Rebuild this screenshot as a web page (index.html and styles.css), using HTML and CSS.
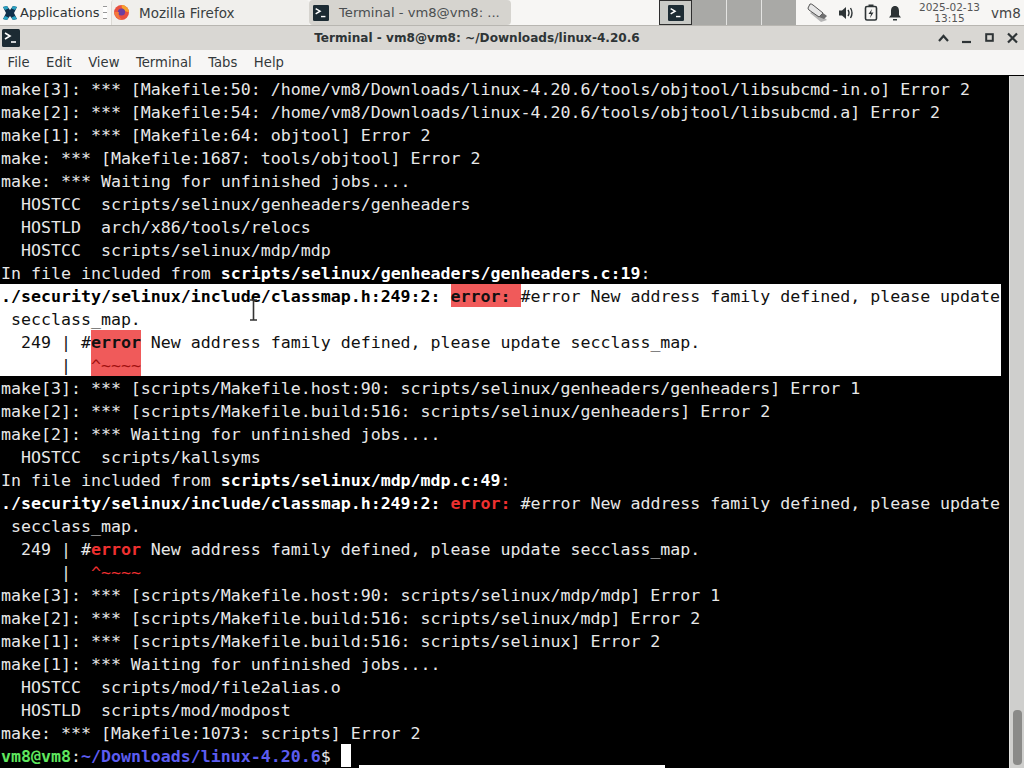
FILE: index.html
```html
<!DOCTYPE html>
<html lang="en">
<head>
<meta charset="utf-8">
<title>Terminal - vm8@vm8</title>
<link rel="stylesheet" href="styles.css">
</head>
<body>
<div class="screen">
  <header class="panel">
    <div class="apps">
      <svg class="apps-icon" width="16" height="16" viewBox="0 0 16 16"><path d="M1 2 L5 1 L8 5 L11 1 L15 2 L12 8 L15 14 L11 15 L8 11 L5 15 L1 14 L4 8 Z" fill="#0f2f4a"/><path d="M1 2 L5 1 L6.5 3.5 L3 5 Z M15 2 L11 1 L9.5 3.5 L13 5 Z M1 14 L5 15 L6.5 12.5 L3 11 Z M15 14 L11 15 L9.5 12.5 L13 11 Z" fill="#2aa3c4"/></svg>
      <span>Applications</span>
      <span class="handle"></span>
    </div>
    <div class="task task-ff">
      <svg width="17" height="17" viewBox="0 0 17 17"><circle cx="8.5" cy="8.5" r="7.5" fill="#e8503f"/><path d="M8.5 1 A7.5 7.5 0 0 1 16 8.5 L12 7 L9 4 Z" fill="#f7a02c"/><circle cx="8.5" cy="8" r="3.6" fill="#6b3fa0"/><path d="M1 8 C2 13 6 16 10 15.6 C6 14 5 11 6 8 Z" fill="#f4793b"/></svg>
      <span>Mozilla Firefox</span>
    </div>
    <div class="task task-term">
      <svg class="term-icon" width="16" height="16" viewBox="0 0 18 18"><rect width="18" height="18" rx="1.5" fill="#1c2b33"/><path d="M3 4 L8 7 L3 10" fill="none" stroke="#fff" stroke-width="1.6"/><path d="M9 13 H14" stroke="#fff" stroke-width="1.6"/></svg>
      <span>Terminal - vm8@vm8: ...</span>
    </div>
    <div class="spacer"></div>
    <div class="pager">
      <div class="ws ws-active"><svg width="16" height="16" viewBox="0 0 18 18"><rect width="18" height="18" rx="1.5" fill="#1c2b33"/><path d="M3 4 L8 7 L3 10" fill="none" stroke="#fff" stroke-width="1.6"/><path d="M9 13 H14" stroke="#fff" stroke-width="1.6"/></svg></div>
      <div class="ws"></div>
      <div class="ws"></div>
      <div class="ws"></div>
    </div>
    <div class="tray">
      <svg width="21" height="20" viewBox="0 0 21 20"><path d="M3 10 L14 19 L20 17 L8 7 Z" fill="#b5b5b5"/><path d="M3 1 L1 5 Q1 6 2 7 L12 14 L16 10 L6 2 Q4 0.5 3 1 Z" fill="#e6e6e6" stroke="#555" stroke-width="1"/><path d="M12 14 L16 10 L20 13 L17 16 Z" fill="#6f6f6f"/></svg>
      <svg width="16" height="16" viewBox="0 0 16 16"><path d="M1 5.5 H4 L8 2 V14 L4 10.5 H1 Z" fill="#2e3436"/><path d="M10 5 Q12 8 10 11 M12.5 3 Q15.5 8 12.5 13" fill="none" stroke="#2e3436" stroke-width="1.4"/></svg>
      <svg width="14" height="17" viewBox="0 0 14 17"><rect x="4.5" y="0.5" width="5" height="2" fill="#2e3436"/><rect x="1.5" y="2.5" width="11" height="13.5" rx="1.5" fill="none" stroke="#2e3436" stroke-width="1.6"/><path d="M8 5 L4.5 10 H7 L6 14 L9.5 8.5 H7 Z" fill="#2e3436"/></svg>
      <svg width="14" height="16" viewBox="0 0 14 16"><path d="M7 1 C10 1 11 3.5 11 6 V10 L13 12.5 H1 L3 10 V6 C3 3.5 4 1 7 1 Z" fill="#2e3436"/><rect x="5" y="14" width="4" height="1.5" fill="#2e3436"/></svg>
    </div>
    <div class="clock"><span>2025-02-13</span><span>13:15</span></div>
    <div class="user">vm8</div>
  </header>

  <div class="titlebar">
    <svg class="title-icon" width="18" height="18" viewBox="0 0 18 18"><rect width="18" height="18" rx="1.5" fill="#1c2b33"/><path d="M3 4 L8 7 L3 10" fill="none" stroke="#fff" stroke-width="1.6"/><path d="M9 13 H14" stroke="#fff" stroke-width="1.6"/></svg>
    <div class="title">Terminal - vm8@vm8: ~/Downloads/linux-4.20.6</div>
    <div class="wm">
      <svg width="23" height="14" viewBox="0 0 23 14"><path d="M7 10 L11.5 5 L16 10" fill="none" stroke="#2e3436" stroke-width="2.2"/></svg>
      <svg width="23" height="14" viewBox="0 0 23 14"><path d="M7 11 H16" stroke="#2e3436" stroke-width="2.2"/></svg>
      <svg width="23" height="14" viewBox="0 0 23 14"><rect x="8.2" y="3.2" width="6.6" height="6.6" fill="none" stroke="#2e3436" stroke-width="2"/></svg>
      <svg width="23" height="14" viewBox="0 0 23 14"><path d="M7 2.5 L16 11.5 M16 2.5 L7 11.5" stroke="#2e3436" stroke-width="2.2"/></svg>
    </div>
  </div>

  <nav class="menubar">
    <span>File</span><span>Edit</span><span>View</span><span>Terminal</span><span>Tabs</span><span>Help</span>
  </nav>

  <main class="term">
    <div class="output">
<div class="row">make[3]: *** [Makefile:50: /home/vm8/Downloads/linux-4.20.6/tools/objtool/libsubcmd-in.o] Error 2</div>
<div class="row">make[2]: *** [Makefile:54: /home/vm8/Downloads/linux-4.20.6/tools/objtool/libsubcmd.a] Error 2</div>
<div class="row">make[1]: *** [Makefile:64: objtool] Error 2</div>
<div class="row">make: *** [Makefile:1687: tools/objtool] Error 2</div>
<div class="row">make: *** Waiting for unfinished jobs....</div>
<div class="row">  HOSTCC  scripts/selinux/genheaders/genheaders</div>
<div class="row">  HOSTLD  arch/x86/tools/relocs</div>
<div class="row">  HOSTCC  scripts/selinux/mdp/mdp</div>
<div class="row">In file included from <b>scripts/selinux/genheaders/genheaders.c:19</b>:</div>
<div class="row sel"><b>./security/selinux/include/classmap.h:249:2: </b><b class="hit">error: </b>#error New address family defined, please update</div>
<div class="row sel"> secclass_map.</div>
<div class="row sel">  249 | #<b class="hit">error</b> New address family defined, please update secclass_map.</div>
<div class="row sel">      |  <span class="hit caret">^~~~~</span></div>
<div class="row">make[3]: *** [scripts/Makefile.host:90: scripts/selinux/genheaders/genheaders] Error 1</div>
<div class="row">make[2]: *** [scripts/Makefile.build:516: scripts/selinux/genheaders] Error 2</div>
<div class="row">make[2]: *** Waiting for unfinished jobs....</div>
<div class="row">  HOSTCC  scripts/kallsyms</div>
<div class="row">In file included from <b>scripts/selinux/mdp/mdp.c:49</b>:</div>
<div class="row"><b>./security/selinux/include/classmap.h:249:2: </b><b class="red">error: </b>#error New address family defined, please update</div>
<div class="row"> secclass_map.</div>
<div class="row">  249 | #<b class="red">error</b> New address family defined, please update secclass_map.</div>
<div class="row">      |  <span class="red">^~~~~</span></div>
<div class="row">make[3]: *** [scripts/Makefile.host:90: scripts/selinux/mdp/mdp] Error 1</div>
<div class="row">make[2]: *** [scripts/Makefile.build:516: scripts/selinux/mdp] Error 2</div>
<div class="row">make[1]: *** [scripts/Makefile.build:516: scripts/selinux] Error 2</div>
<div class="row">make[1]: *** Waiting for unfinished jobs....</div>
<div class="row">  HOSTCC  scripts/mod/file2alias.o</div>
<div class="row">  HOSTLD  scripts/mod/modpost</div>
<div class="row">make: *** [Makefile:1073: scripts] Error 2</div>
<div class="row"><b class="green">vm8@vm8</b>:<b class="blue">~/Downloads/linux-4.20.6</b>$ <span class="cursor"> </span></div>
    </div>
    <div class="scrollbar"><div class="thumb"></div></div>
  </main>

  <svg class="ibeam" width="9" height="22" viewBox="0 0 9 22"><path d="M1 1 H8 M4.5 1 V21 M1 21 H8" fill="none" stroke="#333" stroke-width="1.6"/></svg>
  <div class="stray"></div>
</div>
</body>
</html>
```

FILE: styles.css
```css
* { box-sizing: border-box; }
html, body { margin: 0; padding: 0; }
body { background: #000; font-family: "DejaVu Sans", sans-serif; }
.screen { position: relative; width: 1024px; height: 768px; overflow: hidden; display: flex; flex-direction: column; }

.panel { flex: 0 0 26px; display: flex; align-items: stretch; background: #f7f6f4; border-bottom: 1px solid #b8b6b1; color: #2e3436; font-size: 13px; }
.apps { flex: 0 0 111px; display: flex; align-items: center; padding-left: 2px; gap: 2px; }
.handle { width: 4px; height: 13px; margin-left: 2px; border-top: 1px solid #999; border-bottom: 1px solid #999; background: linear-gradient(#fff 45%, #999 45%, #999 55%, #fff 55%); }
.task { display: flex; align-items: center; border-radius: 3px 3px 0 0; }
.task-ff { flex: 0 0 198px; padding-left: 1px; gap: 9px; background: #f0efec; border-left: 1px solid #dcdad5; color: #3a3f41; font-size: 13.5px; }
.task-term { flex: 0 0 202px; padding-left: 4px; gap: 10px; background: #d6d4cf; color: #4a4e50; border-radius: 4px; font-size: 13.15px; }
.spacer { flex: 0 0 148px; }
.pager { flex: 0 0 137px; display: flex; }
.ws { flex: 1; background: #a9a9a6; border-right: 1px solid #e4e4e2; }
.ws:last-child { border-right: 0; }
.ws-active { display: flex; align-items: center; justify-content: center; background: #c9cac6; border: 1px solid #2e2e2e; flex: 0 0 33px; }
.tray { flex: 0 0 116px; display: flex; align-items: center; padding-left: 11px; gap: 10px; }
.clock { flex: 0 0 73px; display: flex; flex-direction: column; align-items: center; justify-content: center; padding-top: 1px; padding-left: 2px; font-size: 10.5px; line-height: 11px; color: #555; }
.user { flex: 1; display: flex; align-items: center; padding-left: 6px; white-space: nowrap; color: #444; font-size: 13.5px; }

.titlebar { flex: 0 0 24px; display: flex; align-items: center; background: #d9d7d3; }
.title-icon { margin-left: 2px; }
.title { flex: 1; text-align: center; font-size: 12.1px; font-weight: 700; color: #2e3436; padding-left: 2px; }
.wm { flex: 0 0 92px; display: flex; }

.menubar { flex: 0 0 25px; display: flex; align-items: center; gap: 16.5px; padding-left: 7.5px; background: #f7f6f5; color: #33383a; font-size: 13.2px; }

.term { flex: 1; display: flex; background: #000; border-top: 1px solid #000; }
.output { flex: 1; padding: 1px 0 0 1px; font-family: "DejaVu Sans Mono", monospace; font-size: 16.6px; line-height: 25px; color: #e8e8e8; }
.row { height: 23px; white-space: pre; }
.row b { font-weight: 700; color: #fff; }
.sel { background: #fff; color: #111; width: 1001px; margin-left: -1px; padding-left: 1px; }
.sel b { color: #000; }
.row .hit { background: #f05a5a; color: #111; display: inline-block; height: 23px; vertical-align: top; }
.row .caret { color: #a01010; }
.row .red { color: #ef3030; }
.row .green { color: #5fe85f; }
.row .blue { color: #5c5cf0; }
.cursor { display: inline-block; width: 10px; height: 23px; background: #fff; vertical-align: top; }

.scrollbar { flex: 0 0 15px; position: relative; display: flex; align-items: flex-end; justify-content: center; padding-bottom: 3px; background: #cfcfcd; border-left: 1px solid #e2e2e0; }
.thumb { width: 9px; height: 55px; background: #8a8a88; border-radius: 4px; }

.ibeam { position: absolute; left: 249px; top: 299px; }
.stray { position: absolute; left: 359px; top: 765px; width: 306px; height: 3px; background: #fff; }
```
